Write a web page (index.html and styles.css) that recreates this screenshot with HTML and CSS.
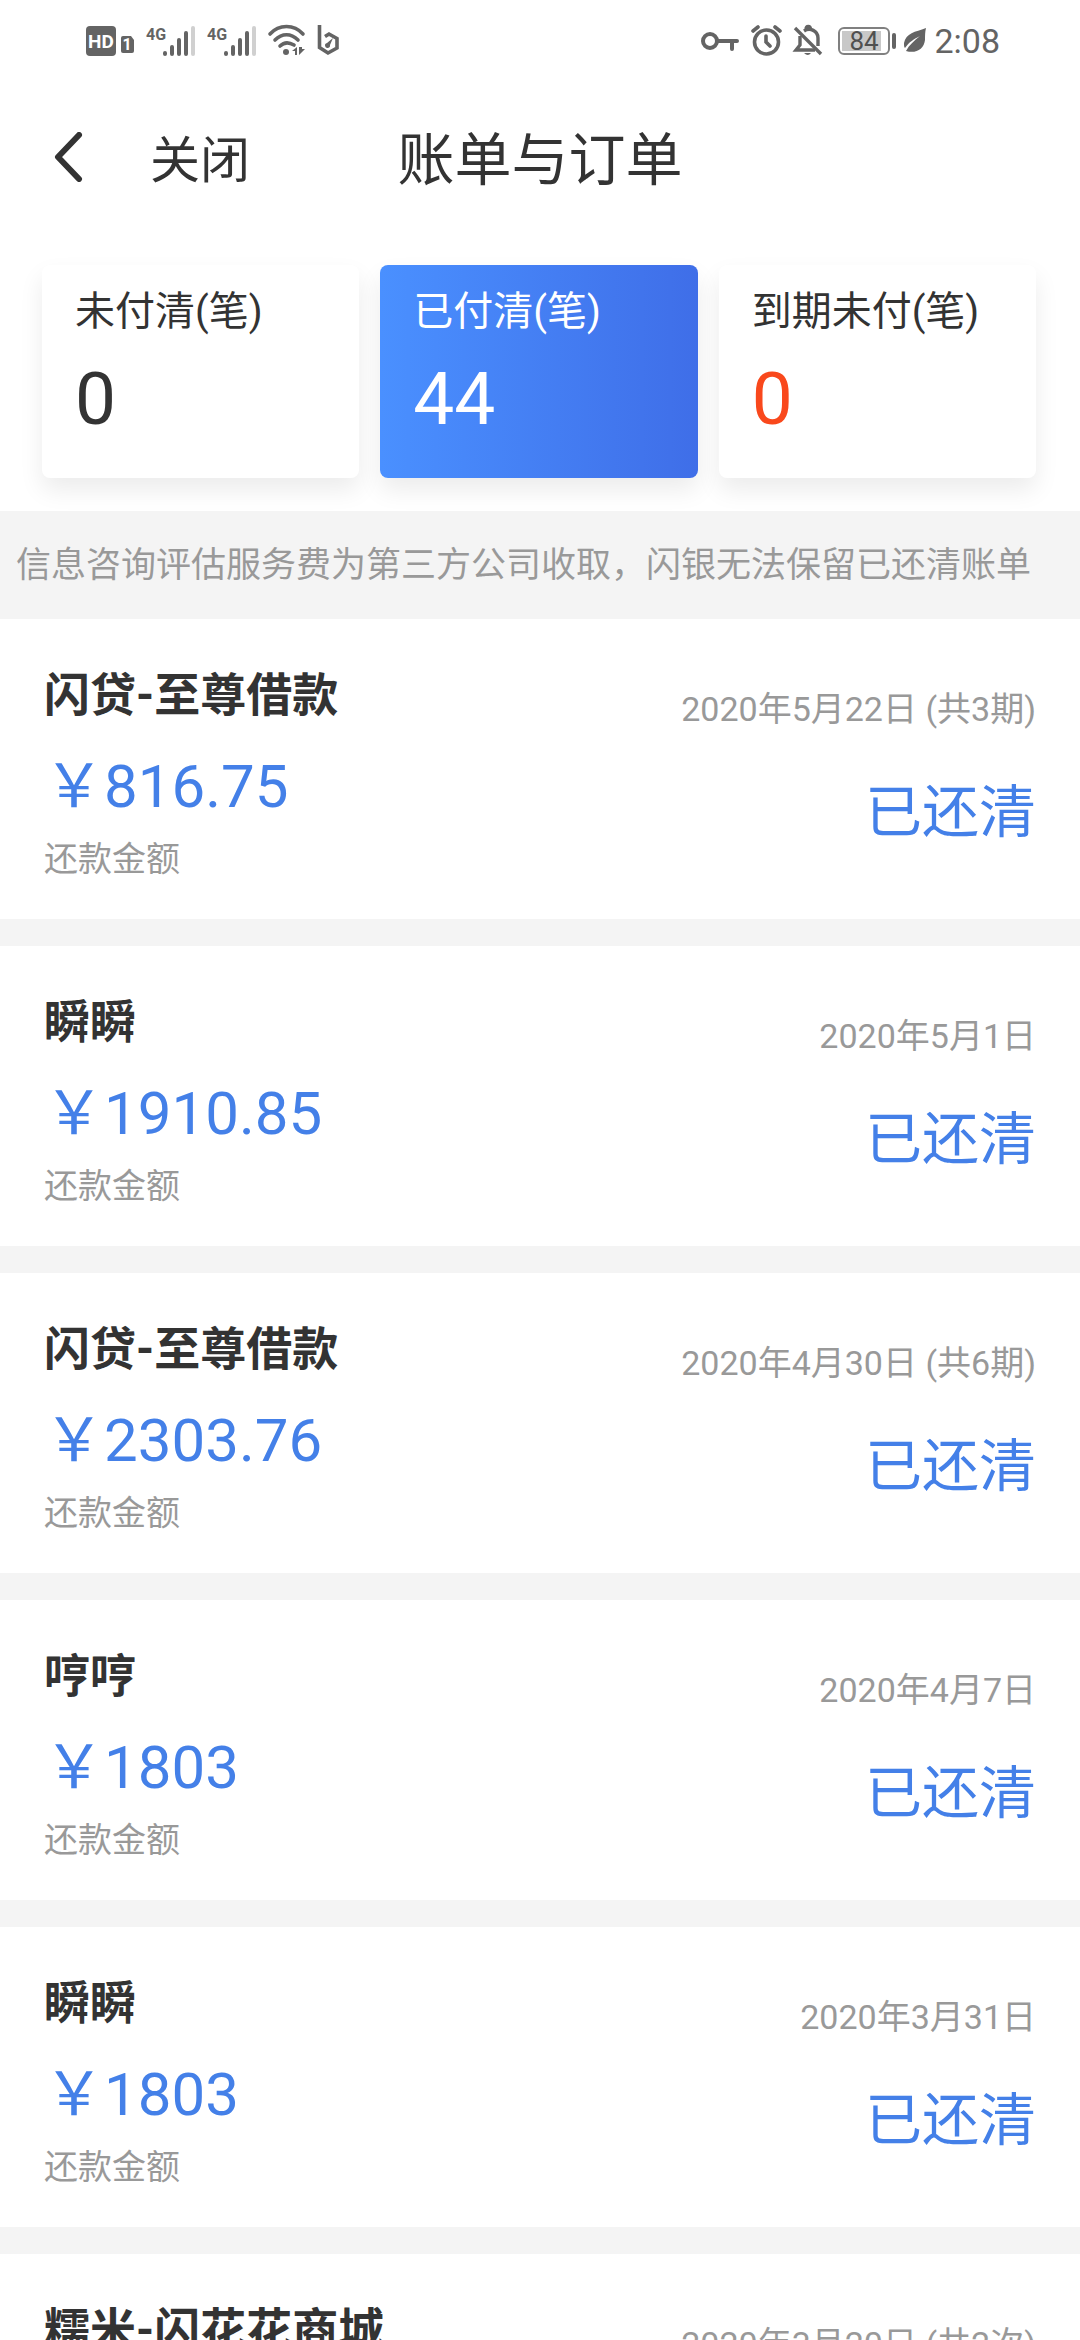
FILE: index.html
```html
<!DOCTYPE html>
<html lang="zh-CN">
<head>
<meta charset="utf-8">
<meta name="viewport" content="width=device-width, initial-scale=1">
<title>账单与订单</title>
<link rel="stylesheet" href="styles.css">
</head>
<body>
<div class="app">
  <div class="status-bar">
    <div class="status-left">
      <svg width="49" height="30" viewBox="0 0 49 30">
        <rect width="30" height="30" rx="4" fill="#646464"/>
        <text x="15" y="22" text-anchor="middle" class="hd-text">HD</text>
        <path d="M37 10h8l3 4v11a2 2 0 0 1-2 2h-9a2 2 0 0 1-2-2V12a2 2 0 0 1 2-2z" fill="#646464"/>
        <text x="41" y="24" text-anchor="middle" class="sim-text">1</text>
      </svg>
      <svg width="50" height="31" viewBox="0 0 50 31">
        <text x="0" y="15" class="net-text">4G</text>
        <g stroke="#646464" stroke-width="4" stroke-linecap="round"><path d="M19 28v1M26 22v7M33 15v14M40 8v21"/><path d="M47 3v26" stroke="#d0d0d0"/></g>
      </svg>
      <svg width="50" height="31" viewBox="0 0 50 31">
        <text x="0" y="15" class="net-text">4G</text>
        <g stroke="#646464" stroke-width="4" stroke-linecap="round"><path d="M19 28v1M26 22v7M33 15v14M40 8v21"/><path d="M47 3v26" stroke="#d0d0d0"/></g>
      </svg>
      <svg width="38" height="31" viewBox="0 0 38 31">
        <g fill="none" stroke="#646464" stroke-width="3.6" stroke-linecap="round"><path d="M2 9C11-1 26-1 35 9M7 15c7-7 16-7 23 0M12 21c4-4 9-4 14-1"/></g>
        <circle cx="18" cy="27" r="3" fill="#646464"/>
        <path d="M24 26l5-4v8h-2v-4zM31 22v8l6-6h-3v-2z" fill="#646464"/>
      </svg>
      <svg width="23" height="31" viewBox="0 0 23 31">
        <path d="M2.500 0v22.500l8.500 5.500 9-5V13.500L12 9l-4 2.500" fill="none" stroke="#646464" stroke-width="3.600"/>
        <path d="M16 13l-3 7a2.500 2.500 0 1 1-3-2z" fill="#646464"/>
      </svg>
    </div>
    <div class="status-right">
      <svg width="38" height="30" viewBox="0 0 38 30">
        <g fill="none" stroke="#646464" stroke-width="4"><circle cx="9" cy="15" r="7"/><path d="M16 15h20M31 15v8" stroke-linecap="round"/></g>
      </svg>
      <svg width="31" height="31" viewBox="0 0 31 31">
        <g fill="none" stroke="#646464" stroke-width="3.600" stroke-linecap="round"><circle cx="15.500" cy="17" r="12"/><path d="M15 11v6l4 4M2 6l5-4M24 2l5 4"/></g>
      </svg>
      <svg width="29" height="31" viewBox="0 0 29 31">
        <g fill="none" stroke="#646464" stroke-width="3.400"><path d="M1 3l26 26"/><path d="M6 11v9l-4 5h19M10 6c6-4 14 0 14 7v8M12 4.500c0-4 4.500-4 4.500 0"/></g>
        <path d="M10 28h7q-3 4-7 0z" fill="#646464"/>
      </svg>
      <div class="power">
        <svg width="59" height="28" viewBox="0 0 59 28">
          <rect x="1" y="1" width="50" height="26" rx="5" fill="#fff" stroke="#808080" stroke-width="2"/>
          <rect x="4" y="4" width="39" height="20" fill="#c8c8c8"/>
          <rect x="54" y="6" width="4" height="16" rx="2" fill="#646464"/>
          <text x="26" y="23" text-anchor="middle" class="battery-text">84</text>
        </svg>
        <svg width="23" height="25" viewBox="0 0 23 25">
          <path d="M22 0C11 4 2 5 0 15c0 3 0 4 1 5C5 14 10 11 16 8 10 13 5 17 2 23c10 3 18-2 19-11 0-4 0-8 1-12z" fill="#646464"/>
        </svg>
        <span class="clock">2:08</span>
      </div>
    </div>
  </div>

  <header class="nav">
    <div class="nav-actions">
      <button class="back" type="button" aria-label="返回">
        <svg width="30" height="50" viewBox="0 0 30 50"><path d="M25 3L4 25l21 22" fill="none" stroke="#333" stroke-width="6" stroke-linecap="round" stroke-linejoin="round"/></svg>
      </button>
      <button class="close" type="button">关闭</button>
    </div>
    <h1 class="title">账单与订单</h1>
  </header>

  <nav class="tabs">
    <button class="tab" type="button"><span class="tab-label">未付清(笔)</span><span class="tab-count">0</span></button>
    <button class="tab tab-active" type="button"><span class="tab-label">已付清(笔)</span><span class="tab-count">44</span></button>
    <button class="tab tab-due" type="button"><span class="tab-label">到期未付(笔)</span><span class="tab-count">0</span></button>
  </nav>

  <p class="notice">信息咨询评估服务费为第三方公司收取，闪银无法保留已还清账单</p>

  <ul class="bills">
    <li class="bill">
      <div class="bill-main"><h2 class="name">闪贷-至尊借款</h2><span class="amount">￥816.75</span><span class="caption">还款金额</span></div>
      <div class="bill-side"><span class="date">2020年5月22日 (共3期)</span><span class="state">已还清</span></div>
    </li>
    <li class="bill">
      <div class="bill-main"><h2 class="name">瞬瞬</h2><span class="amount">￥1910.85</span><span class="caption">还款金额</span></div>
      <div class="bill-side"><span class="date">2020年5月1日</span><span class="state">已还清</span></div>
    </li>
    <li class="bill">
      <div class="bill-main"><h2 class="name">闪贷-至尊借款</h2><span class="amount">￥2303.76</span><span class="caption">还款金额</span></div>
      <div class="bill-side"><span class="date">2020年4月30日 (共6期)</span><span class="state">已还清</span></div>
    </li>
    <li class="bill">
      <div class="bill-main"><h2 class="name">哼哼</h2><span class="amount">￥1803</span><span class="caption">还款金额</span></div>
      <div class="bill-side"><span class="date">2020年4月7日</span><span class="state">已还清</span></div>
    </li>
    <li class="bill">
      <div class="bill-main"><h2 class="name">瞬瞬</h2><span class="amount">￥1803</span><span class="caption">还款金额</span></div>
      <div class="bill-side"><span class="date">2020年3月31日</span><span class="state">已还清</span></div>
    </li>
    <li class="bill">
      <div class="bill-main"><h2 class="name">糯米-闪花花商城</h2></div>
      <div class="bill-side"><span class="date">2020年3月20日 (共2次)</span></div>
    </li>
  </ul>
</div>
</body>
</html>
```

FILE: styles.css
```css
* {
  box-sizing: border-box;
  margin: 0;
  padding: 0;
}

body {
  font-family: Roboto, "Noto Sans CJK SC", sans-serif;
  color: #333;
  background: #fff;
}

button {
  font: inherit;
  color: inherit;
  background: none;
  border: 0;
  text-align: left;
  cursor: pointer;
}

.app {
  display: flex;
  flex-direction: column;
  height: 100vh;
  overflow: hidden;
}

.app > * {
  flex-shrink: 0;
}

/* System status bar */
.status-bar {
  display: flex;
  justify-content: space-between;
  align-items: center;
  height: 81px;
  padding: 0 80px 0 86px;
}

.status-bar svg {
  overflow: visible;
}

.status-left,
.status-right,
.power {
  display: flex;
  align-items: center;
}

.status-left {
  gap: 11px;
}

.status-right {
  gap: 12px;
}

.power {
  gap: 7px;
  padding-left: 3px;
}

.hd-text {
  font-size: 19px;
  font-weight: 700;
  fill: #fff;
}

.sim-text {
  font-size: 16px;
  font-weight: 700;
  fill: #fff;
}

.net-text {
  font-size: 16px;
  font-weight: 700;
  fill: #646464;
}

.battery-text {
  font-size: 26px;
  fill: #505050;
}

.clock {
  font-size: 34px;
  line-height: 40px;
  color: #646464;
}

/* Navigation header */
.nav {
  display: grid;
  grid-template-columns: 1fr auto 1fr;
  align-items: center;
  padding: 40px 54px 64px;
}

.nav-actions {
  display: flex;
  align-items: flex-start;
  gap: 66px;
}

.back {
  padding-top: 11px;
}

.back svg {
  display: block;
}

.close {
  font-size: 50px;
  line-height: 80px;
}

.title {
  font-size: 57px;
  font-weight: 400;
  line-height: 80px;
}

/* Bill status tabs */
.tabs {
  display: grid;
  grid-template-columns: repeat(3, 1fr);
  gap: 21px;
  padding: 0 44px 33px 42px;
}

.tab {
  display: flex;
  flex-direction: column;
  gap: 19px;
  padding: 19px 33px 39px;
  border-radius: 8px;
  background: #fff;
  box-shadow: 0 12px 24px rgba(0, 0, 0, 0.08);
}

.tab-active {
  color: #fff;
  background: linear-gradient(90deg, #4a90ff, #3f6ee8);
}

.tab-due .tab-count {
  color: #f9481c;
}

.tab-label {
  font-size: 40px;
  line-height: 56px;
}

.tab-count {
  font-size: 73px;
  line-height: 80px;
}

.notice {
  padding: 30px 16px 28px;
  font-size: 35px;
  line-height: 50px;
  color: #999;
  background: #f4f4f4;
  white-space: nowrap;
}

/* Bill list */
.bills {
  display: flex;
  flex-direction: column;
  gap: 27px;
  list-style: none;
  background: #f4f4f4;
}

.bill {
  display: flex;
  justify-content: space-between;
  padding: 51px 44px 40px;
  background: #fff;
}

.bill-main,
.bill-side {
  display: flex;
  flex-direction: column;
}

.bill-side {
  align-items: flex-end;
  padding-top: 14px;
}

.name {
  margin-bottom: 32px;
  font-size: 46px;
  font-weight: 700;
  line-height: 50px;
}

.amount {
  margin-bottom: 17px;
  font-size: 60px;
  line-height: 70px;
  color: #4480e8;
}

.caption {
  font-size: 34px;
  line-height: 40px;
  color: #999;
}

.date {
  margin-bottom: 39px;
  font-size: 34px;
  line-height: 50px;
  color: #999;
}

.state {
  font-size: 57px;
  line-height: 80px;
  color: #4480e8;
}
```
